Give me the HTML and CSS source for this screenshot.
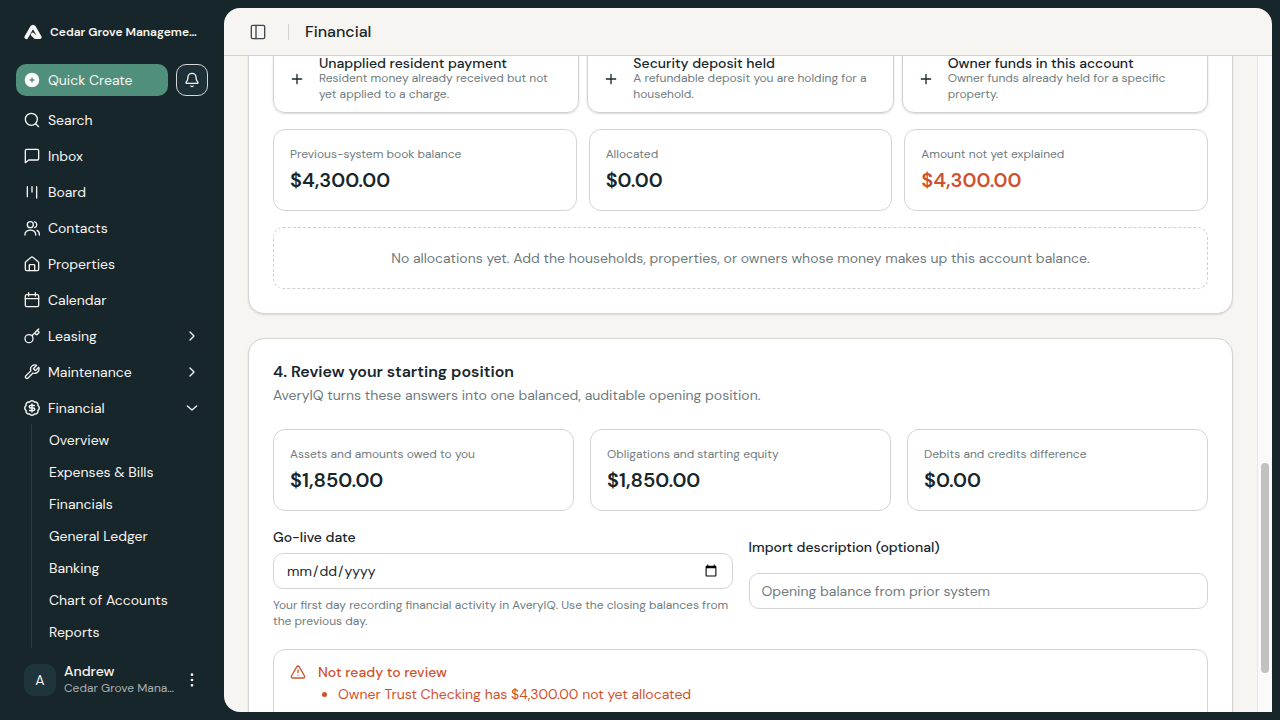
FILE: index.html
```html
<!DOCTYPE html>
<html lang="en">
<head>
    <meta charset="UTF-8">
    <meta name="viewport" content="width=device-width, initial-scale=1.0">
    <title>Financial</title>
    <link rel="stylesheet" href="styles.css">
</head>
<body>
    <aside class="sidebar">
        <a class="brand" href="#">
            <svg class="brand-logo" viewBox="0 0 18 16"><path d="M2.300 13.200 7.900 3.400Q9 1.800 10.100 3.400L15.700 13.200H11.500L8.800 10.600" fill="none" stroke="currentColor" stroke-width="3.800" stroke-linecap="round" stroke-linejoin="round"/></svg>
            <span class="brand-name">Cedar Grove Management</span>
        </a>
        <div class="actions">
            <button class="quick-create">
                <svg class="icon" viewBox="0 0 24 24"><circle cx="12" cy="12" r="10" fill="#fff"/><path d="M12 9v6M9 12h6" stroke="#4f8f7c" stroke-width="2"/></svg>
                Quick Create
            </button>
            <button class="bell" aria-label="Notifications">
                <svg class="icon" viewBox="0 0 24 24"><path d="M10.268 21a2 2 0 0 0 3.464 0M3.262 15.326A1 1 0 0 0 4 17h16a1 1 0 0 0 .74-1.673C19.410 13.956 18 12.499 18 8A6 6 0 0 0 6 8c0 4.499-1.411 5.956-2.738 7.326"/></svg>
            </button>
        </div>
        <nav class="nav">
            <a class="nav-item" href="#"><svg class="icon" viewBox="0 0 24 24"><circle cx="11" cy="11" r="9"/><path d="m22 22-4.500-4.500"/></svg>Search</a>
            <a class="nav-item" href="#"><svg class="icon" viewBox="0 0 24 24"><path d="M22 4v12a2 2 0 0 1-2 2H7l-5 4V4a2 2 0 0 1 2-2h16a2 2 0 0 1 2 2z"/></svg>Inbox</a>
            <a class="nav-item" href="#"><svg class="icon" viewBox="0 0 24 24"><path d="M5 4v15M12 4v8M19 4v17"/></svg>Board</a>
            <a class="nav-item" href="#"><svg class="icon" viewBox="0 0 24 24"><circle cx="9.500" cy="7" r="4.500"/><path d="M1.500 22.500v-1a7.500 6 0 0 1 16 0v1M16 2.700a4.500 4.500 0 0 1 0 8.600M19.500 15.500c2.200 1 3.500 3 3.500 6v1"/></svg>Contacts</a>
            <a class="nav-item" href="#"><svg class="icon" viewBox="0 0 24 24"><path d="M16 22v-8a1 1 0 0 0-1-1H9a1 1 0 0 0-1 1v8"/><path d="M2 10a2 2 0 0 1 .7-1.500l8-6.500a2 2 0 0 1 2.600 0l8 6.500A2 2 0 0 1 22 10v10a2 2 0 0 1-2 2H4a2 2 0 0 1-2-2z"/></svg>Properties</a>
            <a class="nav-item" href="#"><svg class="icon" viewBox="0 0 24 24"><path d="M7 1v5M17 1v5M2 10h20"/><rect x="2" y="4" width="20" height="18" rx="2"/></svg>Calendar</a>
            <a class="nav-item" href="#"><svg class="icon" viewBox="0 0 24 24"><circle cx="7.500" cy="16" r="6"/><path d="M12 11.500 22 1.500M16 7.500l2.300 2.300a1 1 0 0 0 1.400 0l2.600-2.600a1 1 0 0 0 0-1.400L19.500 3.500"/></svg>Leasing<svg class="icon chevron" viewBox="0 0 24 24"><path d="m9 18 6-6-6-6"/></svg></a>
            <a class="nav-item" href="#"><svg class="icon" viewBox="0 0 24 24"><path d="M14.700 6.300a1 1 0 0 0 0 1.400l1.600 1.600a1 1 0 0 0 1.400 0l4.300-4.300a6.500 6.500 0 0 1-8.500 8.500l-7.800 7.800a2.300 2.300 0 0 1-3.200-3.200l7.800-7.800a6.500 6.500 0 0 1 8.600-8.400z"/></svg>Maintenance<svg class="icon chevron" viewBox="0 0 24 24"><path d="m9 18 6-6-6-6"/></svg></a>
            <a class="nav-item" href="#"><svg class="icon" viewBox="1 1 22 22"><path d="M3.850 8.620a4 4 0 0 1 4.780-4.770 4 4 0 0 1 6.740 0 4 4 0 0 1 4.780 4.780 4 4 0 0 1 0 6.740 4 4 0 0 1-4.770 4.780 4 4 0 0 1-6.750 0 4 4 0 0 1-4.780-4.770 4 4 0 0 1 0-6.760Z"/><path d="M15.500 8.500H10a1.700 1.700 0 1 0 0 3.500h4a1.700 1.700 0 1 1 0 3.500H8.500M12 17.500v-11"/></svg>Financial<svg class="icon chevron" viewBox="0 0 24 24"><path d="m5 9 7 6 7-6"/></svg></a>
            <div class="subnav">
                <a href="#">Overview</a>
                <a href="#">Expenses &amp; Bills</a>
                <a href="#">Financials</a>
                <a href="#">General Ledger</a>
                <a href="#">Banking</a>
                <a href="#">Chart of Accounts</a>
                <a href="#">Reports</a>
            </div>
        </nav>
        <div class="account">
            <span class="avatar">A</span>
            <div class="account-text">
                <div class="account-name">Andrew</div>
                <div class="account-org">Cedar Grove Management</div>
            </div>
            <button class="more" aria-label="Account menu">
                <svg class="icon" viewBox="0 0 24 24"><circle cx="12" cy="4" r="1"/><circle cx="12" cy="12" r="1"/><circle cx="12" cy="20" r="1"/></svg>
            </button>
        </div>
    </aside>

    <main class="panel">
        <header class="topbar">
            <button class="toggle" aria-label="Toggle sidebar">
                <svg class="icon" viewBox="0 0 24 24"><rect x="2" y="2" width="20" height="20" rx="2"/><path d="M9 2v20"/></svg>
            </button>
            <h1>Financial</h1>
        </header>
        <div class="scroll">
            <div class="content">
                <section class="card card-continued">
                    <div class="grid options">
                        <button class="option">
                            <svg class="icon" viewBox="0 0 24 24"><path d="M5 12h14M12 5v14"/></svg>
                            <span><strong>Unapplied resident payment</strong>Resident money already received but not yet applied to a charge.</span>
                        </button>
                        <button class="option">
                            <svg class="icon" viewBox="0 0 24 24"><path d="M5 12h14M12 5v14"/></svg>
                            <span><strong>Security deposit held</strong>A refundable deposit you are holding for a household.</span>
                        </button>
                        <button class="option">
                            <svg class="icon" viewBox="0 0 24 24"><path d="M5 12h14M12 5v14"/></svg>
                            <span><strong>Owner funds in this account</strong>Owner funds already held for a specific property.</span>
                        </button>
                    </div>
                    <div class="grid balances">
                        <div class="stat"><p>Previous-system book balance</p><b>$4,300.00</b></div>
                        <div class="stat"><p>Allocated</p><b>$0.00</b></div>
                        <div class="stat"><p>Amount not yet explained</p><b class="warn">$4,300.00</b></div>
                    </div>
                    <p class="empty">No allocations yet. Add the households, properties, or owners whose money makes up this account balance.</p>
                </section>

                <section class="card">
                    <h2>4. Review your starting position</h2>
                    <p class="lead">AveryIQ turns these answers into one balanced, auditable opening position.</p>
                    <div class="grid totals">
                        <div class="stat"><p>Assets and amounts owed to you</p><b>$1,850.00</b></div>
                        <div class="stat"><p>Obligations and starting equity</p><b>$1,850.00</b></div>
                        <div class="stat"><p>Debits and credits difference</p><b>$0.00</b></div>
                    </div>
                    <div class="form">
                        <div class="field">
                            <label for="goLive">Go-live date</label>
                            <input type="date" id="goLive">
                            <p class="help">Your first day recording financial activity in AveryIQ. Use the closing balances from the previous day.</p>
                        </div>
                        <div class="field">
                            <label for="description">Import description (optional)</label>
                            <input type="text" id="description" placeholder="Opening balance from prior system">
                        </div>
                    </div>
                    <div class="alert">
                        <svg class="icon" viewBox="0 0 24 24"><path d="m21.730 18-8-14a2 2 0 0 0-3.480 0l-8 14A2 2 0 0 0 4 21h16a2 2 0 0 0 1.730-3M12 9v4M12 17h.01"/></svg>
                        <div>
                            <h3>Not ready to review</h3>
                            <ul>
                                <li>Owner Trust Checking has $4,300.00 not yet allocated</li>
                            </ul>
                        </div>
                    </div>
                </section>
            </div>
            <div class="track"><div class="thumb"></div></div>
        </div>
    </main>
</body>
</html>
```
FILE: styles.css
```css
* {
    box-sizing: border-box;
}
body {
    display: flex;
    height: 100vh;
    margin: 0;
    overflow: hidden;
    background-color: #17262b;
    color: #17262b;
    font-family: "DM Sans", Inter, sans-serif;
    font-size: 14px;
    line-height: 20px;
}
h1, h2, h3, p, ul {
    margin: 0;
}
button, input {
    font: inherit;
    color: inherit;
}
button {
    padding: 0;
    border: none;
    background: none;
    cursor: pointer;
}
a {
    color: inherit;
    text-decoration: none;
}
.icon {
    flex: none;
    width: 16px;
    height: 16px;
    fill: none;
    stroke: currentColor;
    stroke-width: 2;
    stroke-linecap: round;
    stroke-linejoin: round;
}

/* Sidebar */
.sidebar {
    display: flex;
    flex-direction: column;
    flex: none;
    width: 224px;
    padding: 16px;
    color: #f7f5f2;
}
.brand {
    display: flex;
    align-items: center;
    gap: 8px;
    height: 32px;
    padding: 0 8px;
}
.brand-logo {
    flex: none;
    width: 18px;
    height: 16px;
}
.brand-name {
    overflow: hidden;
    font-size: 12px;
    font-weight: 600;
    white-space: nowrap;
    text-overflow: ellipsis;
}
.actions {
    display: flex;
    gap: 8px;
    margin: 16px 0 8px;
}
.quick-create {
    display: flex;
    flex: 1;
    align-items: center;
    gap: 8px;
    height: 32px;
    padding: 0 8px;
    border-radius: 10px;
    background-color: #4f8f7c;
}
.bell {
    display: flex;
    align-items: center;
    justify-content: center;
    width: 32px;
    height: 32px;
    border: 1px solid #d4d4d4;
    border-radius: 10px;
    background-color: #1d3038;
}
.nav {
    flex: 1;
}
.nav-item {
    display: flex;
    align-items: center;
    gap: 8px;
    height: 32px;
    margin-bottom: 4px;
    padding: 0 8px;
}
.nav-item:last-of-type {
    margin-bottom: 0;
}
.chevron {
    margin-left: auto;
}
.subnav {
    margin-left: 15px;
    border-left: 1px solid #2d3c41;
}
.subnav a {
    display: block;
    padding: 6px 17px;
}
.account {
    display: flex;
    align-items: center;
    gap: 8px;
    height: 48px;
    padding: 0 8px;
}
.avatar {
    flex: none;
    width: 32px;
    border-radius: 10px;
    background-color: #1f343b;
    line-height: 32px;
    text-align: center;
}
.account-text {
    flex: 1;
    min-width: 0;
    line-height: 16px;
}
.account-name {
    font-weight: 500;
}
.account-org {
    overflow: hidden;
    color: #a9b0b0;
    font-size: 12px;
    line-height: 18px;
    white-space: nowrap;
    text-overflow: ellipsis;
}
.more {
    display: flex;
}

/* Panel */
.panel {
    display: flex;
    flex: 1;
    flex-direction: column;
    min-width: 0;
    margin: 8px 8px 8px 0;
    overflow: hidden;
    border-radius: 16px 16px 0 16px;
    background-color: #f7f5f1;
}
.topbar {
    display: flex;
    flex: none;
    align-items: center;
    height: 48px;
    padding-left: 26px;
    border-bottom: 1px solid #d0d0ce;
}
.toggle {
    display: flex;
    color: #3c494d;
}
.topbar h1 {
    margin-left: 22px;
    padding-left: 16px;
    border-left: 1px solid #d0d0ce;
    font-size: 16px;
    font-weight: 500;
    line-height: 16px;
}
.scroll {
    display: flex;
    flex: 1;
    min-height: 0;
    overflow: hidden;
}
.content {
    flex: 1;
    padding: 0 24px;
}
.track {
    flex: none;
    width: 15px;
    padding: 0 3px;
    border-left: 1px solid #e8e8e8;
    background-color: #fafafa;
}
.thumb {
    position: relative;
    top: 62%;
    height: 32%;
    border-radius: 4px;
    background-color: #c1c1c1;
}
.card {
    margin-bottom: 24px;
    padding: 24px;
    border: 1px solid #d4d4d2;
    border-radius: 16px;
    background-color: #fff;
    box-shadow: 0 1px 2px rgba(0, 0, 0, 0.12);
}
/* upper part is scrolled under the top bar */
.card-continued {
    margin-top: -36px;
}
.grid {
    display: grid;
    grid-template-columns: repeat(3, 1fr);
}
.options {
    gap: 8px;
}
.option {
    display: flex;
    align-items: center;
    gap: 14px;
    padding: 10px 15px;
    border: 1px solid #d0d0d0;
    border-radius: 12px;
    box-shadow: 0 1px 2px rgba(0, 0, 0, 0.15);
    text-align: left;
}
.option span {
    color: #6f7b7e;
    font-size: 12px;
    line-height: 16px;
}
.option strong {
    display: block;
    color: #17262b;
    font-size: 14px;
    font-weight: 500;
    line-height: 14px;
}
.balances {
    gap: 12px;
    margin: 16px 0;
}
.stat {
    padding: 16px;
    border: 1px solid #d4d4d4;
    border-radius: 12px;
}
.stat p {
    margin-bottom: 4px;
    color: #6f7b7e;
    font-size: 12px;
    line-height: 16px;
}
.stat b {
    display: block;
    font-size: 20px;
    font-weight: 600;
    line-height: 28px;
}
.stat .warn {
    color: #d1512d;
}
.empty {
    padding: 20px;
    border: 1px dashed #d0d0d0;
    border-radius: 10px;
    color: #6f7b7e;
    text-align: center;
}
h2 {
    font-size: 16px;
    font-weight: 600;
    line-height: 18px;
}
.lead {
    margin-top: 4px;
    color: #6f7b7e;
}
.totals {
    gap: 16px;
    margin: 24px 0 16px;
}
.form {
    display: grid;
    grid-template-columns: 1fr 1fr;
    gap: 16px;
}
.field {
    display: grid;
    row-gap: 6px;
    align-items: center;
}
.field label {
    font-weight: 500;
}
.field input {
    align-self: start;
    width: 100%;
    height: 36px;
    padding: 0 12px;
    border: 1px solid #d4d4d4;
    border-radius: 10px;
    background-color: #fff;
}
.field input::placeholder {
    color: #6f7b7e;
}
.help {
    margin-top: 2px;
    color: #6f7b7e;
    font-size: 12px;
    line-height: 16px;
}
.alert {
    display: flex;
    gap: 12px;
    margin-top: 20px;
    padding: 12px 16px 24px;
    border: 1px solid #d4d4d4;
    border-radius: 12px;
    color: #d1512d;
}
.alert .icon {
    margin-top: 2px;
}
.alert h3 {
    font-size: 14px;
    font-weight: 500;
}
.alert ul {
    margin-top: 2px;
    padding-left: 20px;
}
```
